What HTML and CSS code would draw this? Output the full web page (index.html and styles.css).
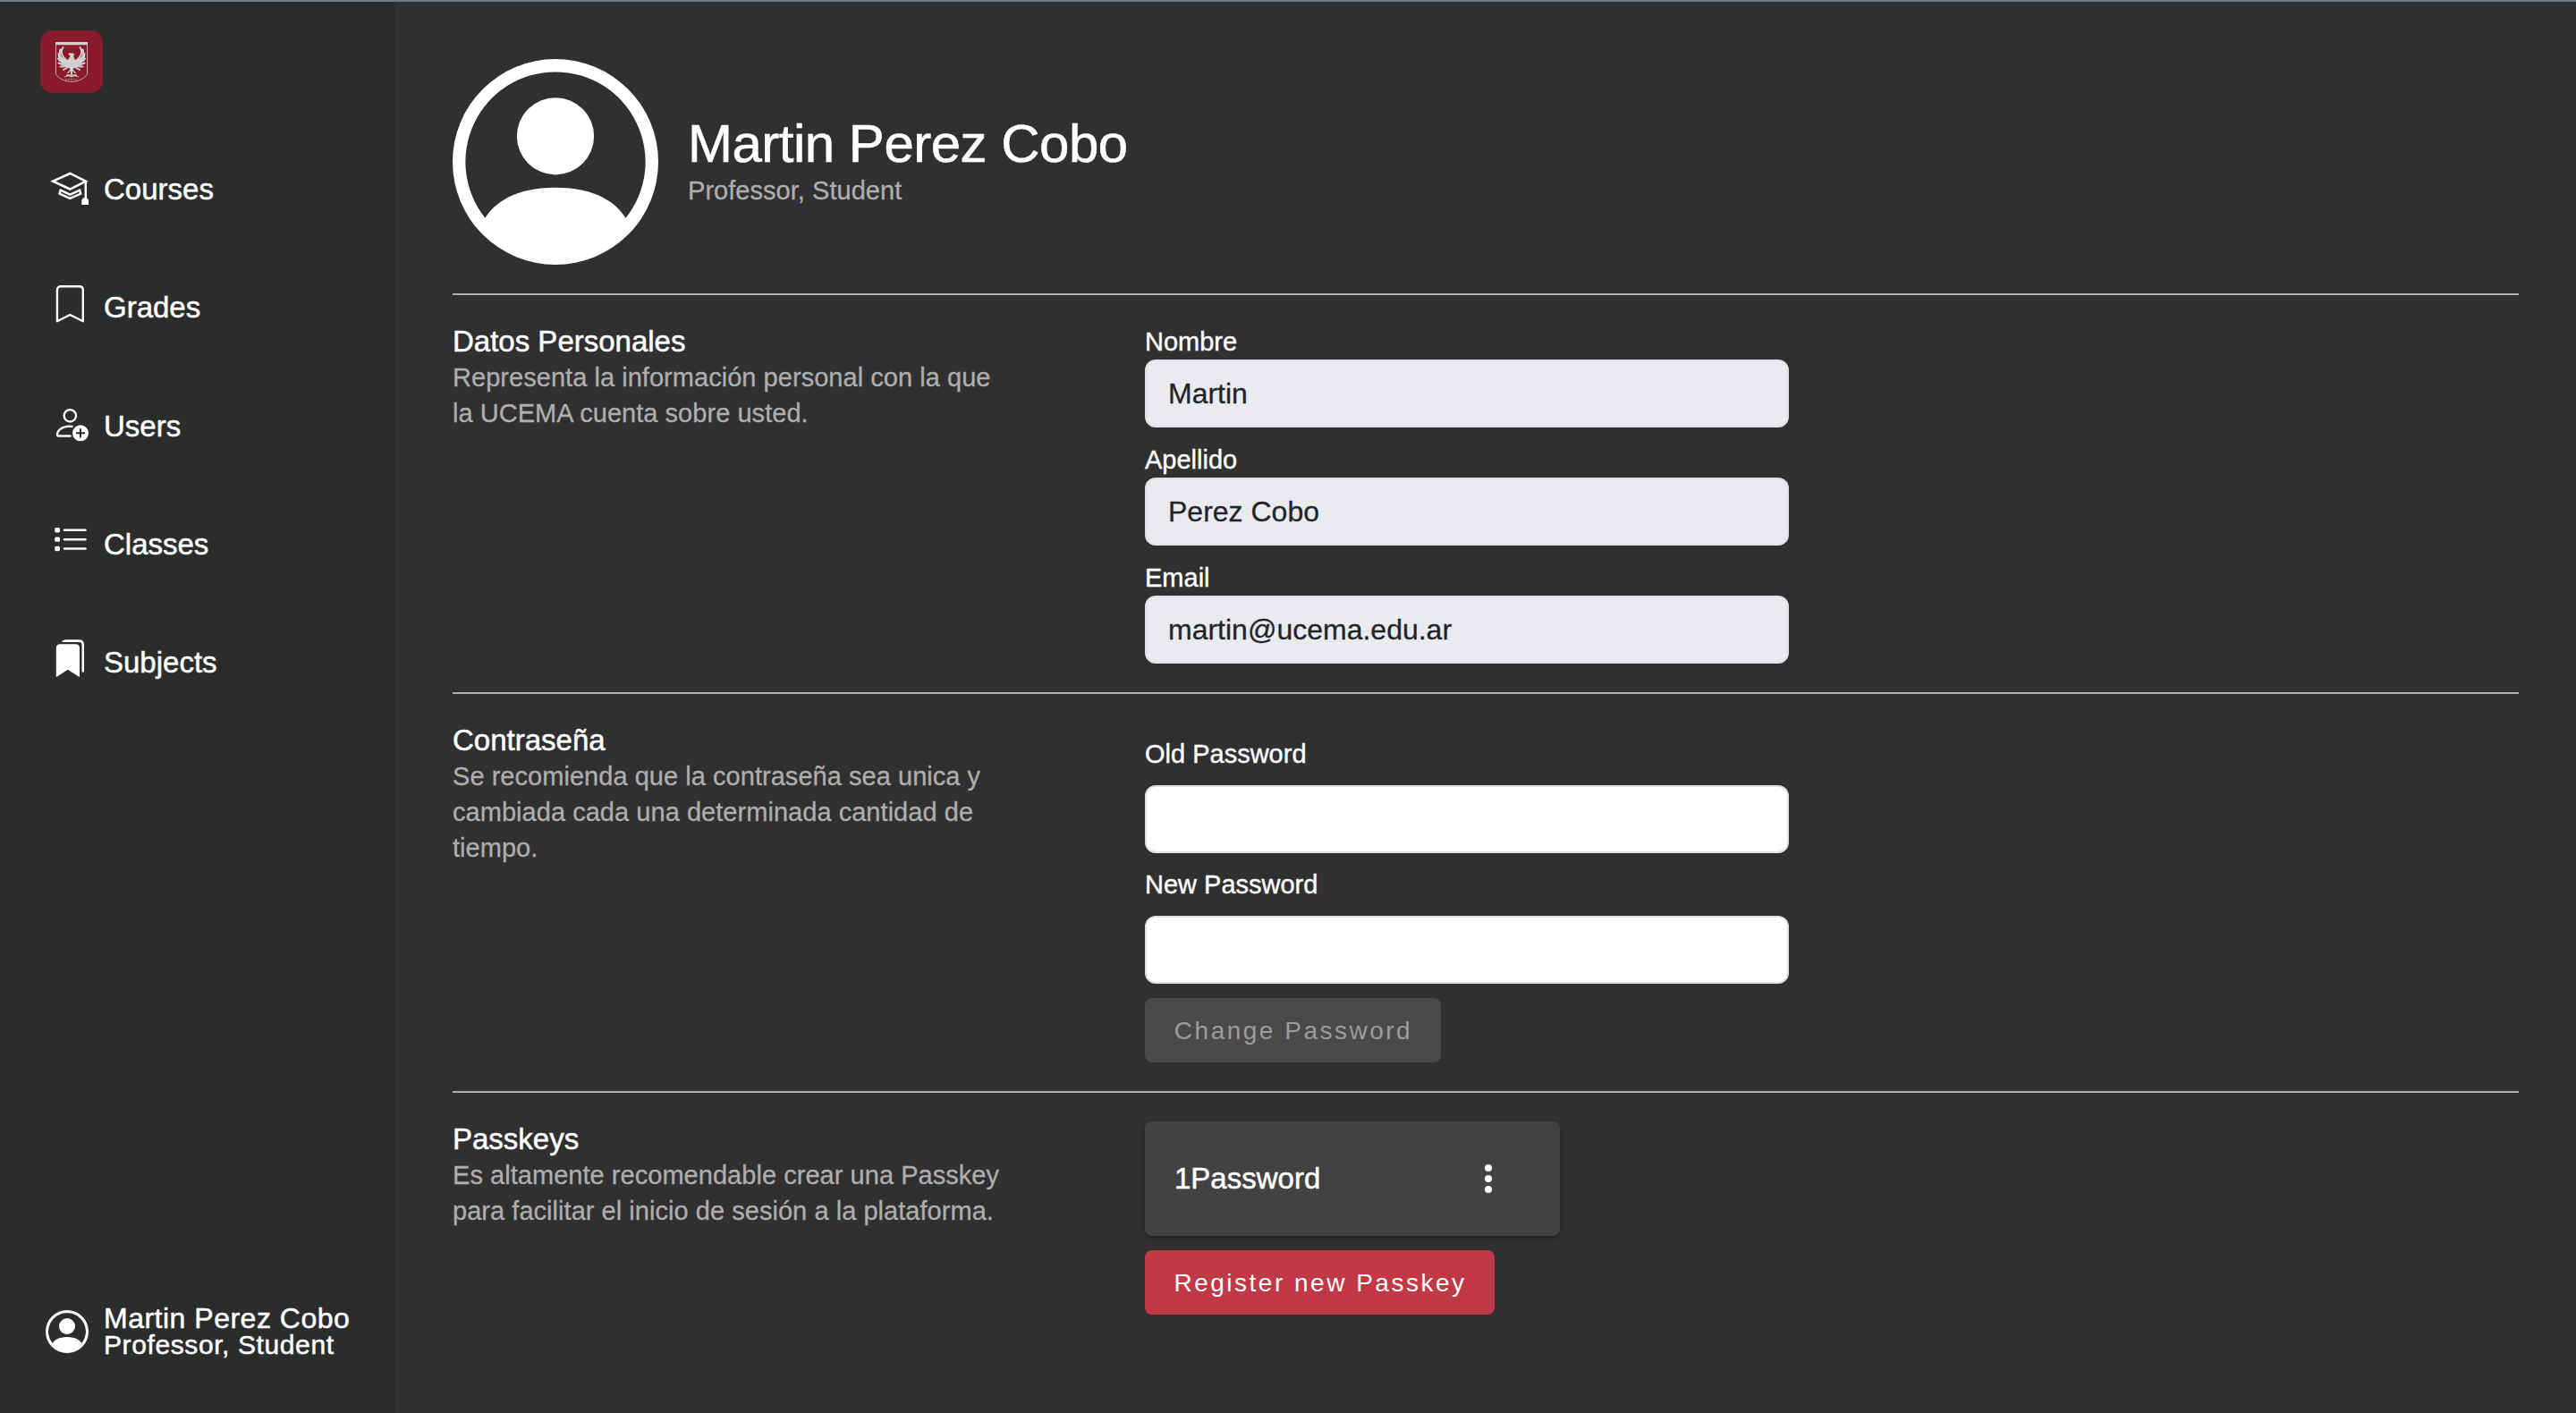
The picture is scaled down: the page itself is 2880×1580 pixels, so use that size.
FILE: index.html
```html
<!DOCTYPE html>
<html lang="es">
<head>
<meta charset="utf-8">
<title>Perfil</title>
<link rel="stylesheet" href="styles.css">
</head>
<body>
<div class="app">
  <aside class="sidebar">
    <svg class="logo" viewBox="0 0 70 70">
      <rect width="70" height="70" rx="14" fill="#881a2b"/>
      <g fill="none" stroke="#cfb5b8" stroke-width="0.9">
        <path d="M17.500 13.500V49c2 3 5 5 8 6.500 6 2.400 13 2.400 19 0 3-1.500 6-3.500 8-6.500V13.500"/>
      </g>
      <path d="M17 13h36v3.200H17z" fill="#d0d0d0"/>
      <g fill="none" stroke="#d0d0d0" stroke-linecap="round" stroke-width="2">
        <path d="M25.500 19C22 24 24 30 32 35M22.500 21.500C20 28 24 33 32 36.500M20.500 26C20 31 25 35 32 37.500M20 31.500C22 35 27 37 32 38M20.500 36.500C24 38 28 38.500 32 39M22.500 40.500C26 40.500 29 40 33 39M26 44L33 40"/>
        <path d="M44.500 19C48 24 46 30 38 35M47.500 21.500C50 28 46 33 38 36.500M49.500 26C50 31 45 35 38 37.500M50 31.500C48 35 43 37 38 38M49.500 36.500C46 38 42 38.500 38 39M47.500 40.500C44 40.500 41 40 37 39M44 44L37 40"/>
      </g>
      <path d="M31 26.200c2-1.200 5-1.200 7.500.6l-1.500 1.400 1 3.300 3 3-2 6-2.500 3 4 4.500-2.500-.5-2-2.500V49h-2v-4l-2 2.500-2.500.5 4-4.500-2.500-3-2-6 3-3 1.500-3z" fill="#d0d0d0"/>
      <path d="M26.500 53l3-3.800h11l3 3.800c-3-1.800-6-1.800-8.500-.4-2.500-1.400-5.500-1.400-8.500.4z" fill="#cdb4b8"/>
      <path d="M28 54.800h14" stroke="#bd8790" stroke-width="1" stroke-dasharray="2 .8" fill="none"/>
    </svg>
    <nav class="nav">
      <a class="nav-item">
        <svg class="nav-icon" viewBox="0 0 48 56" fill="none" stroke="#fff" stroke-width="2.500">
          <path d="M5.300 19.700L24.300 11l17.700 8.700-17.700 8.800z"/>
          <path d="M13.700 29.700l10.600 5 10.800-5 1.100 3.900-11.900 5.300-11.700-5.300z"/>
          <path d="M41.800 20.500V40"/>
          <path d="M39.300 38.300h3.600L45 40.500V46h-7.700v-5.500z" fill="#fff" stroke="none"/>
        </svg>
        <span class="nav-label">Courses</span>
      </a>
      <a class="nav-item">
        <svg class="nav-icon" viewBox="0 0 48 56" fill="none" stroke="#fff" stroke-width="2.400">
          <path d="M9.900 44.200V9.500q0-4.200 4.200-4.200h20.500q4.200 0 4.200 4.200v34.700L24.300 37z" stroke-linejoin="round"/>
        </svg>
        <span class="nav-label">Grades</span>
      </a>
      <a class="nav-item">
        <svg class="nav-icon" viewBox="0 0 48 56" fill="none" stroke="#fff" stroke-width="2.300">
          <circle cx="24.300" cy="16.800" r="6.700"/>
          <path d="M25.500 39.500H11.200q-1.200 0-1.200-1.600c0-4.500 5.500-9 13.500-9.200 2 0 3 .1 4 .3"/>
          <circle cx="36" cy="36.300" r="9" fill="#fff" stroke="none"/>
          <path d="M36 31.300v10M31 36.300h10" stroke="#2b2d2c" stroke-width="2"/>
        </svg>
        <span class="nav-label">Users</span>
      </a>
      <a class="nav-item">
        <svg class="nav-icon" viewBox="0 0 48 56" fill="none" stroke="#fff">
          <path d="M18 12.800h23.500M18 23.200h23.500M18 33.600h23.500" stroke-width="2.500" stroke-linecap="round"/>
          <g fill="#fff" stroke="none">
            <rect x="7.200" y="10" width="5.800" height="5.400" rx="1.600"/>
            <rect x="7.200" y="20.400" width="5.800" height="5.400" rx="1.600"/>
            <rect x="7.200" y="30.800" width="5.800" height="5.400" rx="1.600"/>
          </g>
        </svg>
        <span class="nav-label">Classes</span>
      </a>
      <a class="nav-item">
        <svg class="nav-icon" viewBox="0 0 48 56" fill="#fff">
          <path d="M8.800 12.700q0-4.500 4.500-4.500h17.200q4.500 0 4.500 4.500V44q0 1.300-1.200.6L21.800 36.700 10 44.600q-1.200.7-1.200-.6z"/>
          <path d="M14.800 6.400q1.300-3.200 5-3.200h14.700q5.500 0 5.500 5.500v30.800h-2.500V9.200q0-3.300-3.300-3.300H14.800z"/>
        </svg>
        <span class="nav-label">Subjects</span>
      </a>
    </nav>
    <div class="account">
      <svg class="account-icon" viewBox="0 0 16 16" fill="#fff">
        <path d="M11 6a3 3 0 1 1-6 0 3 3 0 0 1 6 0"/>
        <path fill-rule="evenodd" d="M0 8a8 8 0 1 1 16 0A8 8 0 0 1 0 8m8-7a7 7 0 0 0-5.468 11.370C3.242 11.226 4.805 10 8 10s4.757 1.225 5.468 2.370A7 7 0 0 0 8 1"/>
      </svg>
      <div class="account-text">
        <div class="account-name">Martin Perez Cobo</div>
        <div class="account-role">Professor, Student</div>
      </div>
    </div>
  </aside>

  <main class="main">
    <header class="profile">
      <svg class="avatar" viewBox="0 0 16 16" fill="#fff">
        <path d="M11 6a3 3 0 1 1-6 0 3 3 0 0 1 6 0"/>
        <path fill-rule="evenodd" d="M0 8a8 8 0 1 1 16 0A8 8 0 0 1 0 8m8-7a7 7 0 0 0-5.468 11.370C3.242 11.226 4.805 10 8 10s4.757 1.225 5.468 2.370A7 7 0 0 0 8 1"/>
      </svg>
      <div>
        <h1 class="profile-name">Martin Perez Cobo</h1>
        <div class="muted">Professor, Student</div>
      </div>
    </header>

    <section class="section">
      <div class="section-info">
        <h2 class="section-title">Datos Personales</h2>
        <p class="muted">Representa la información personal con la que la UCEMA cuenta sobre usted.</p>
      </div>
      <div class="fields">
        <label class="field">Nombre<input class="input" value="Martin" disabled></label>
        <label class="field">Apellido<input class="input" value="Perez Cobo" disabled></label>
        <label class="field">Email<input class="input" value="martin@ucema.edu.ar" disabled></label>
      </div>
    </section>

    <section class="section">
      <div class="section-info">
        <h2 class="section-title">Contraseña</h2>
        <p class="muted">Se recomienda que la contraseña sea unica y cambiada cada una determinada cantidad de tiempo.</p>
      </div>
      <div class="passwords">
        <label class="field spaced">Old Password<input class="input" type="password"></label>
        <label class="field spaced">New Password<input class="input" type="password"></label>
        <button class="button button-change" disabled>Change Password</button>
      </div>
    </section>

    <section class="section">
      <div class="section-info">
        <h2 class="section-title">Passkeys</h2>
        <p class="muted">Es altamente recomendable crear una Passkey para facilitar el inicio de sesión a la plataforma.</p>
      </div>
      <div class="passkeys">
        <div class="passkey">
          <span>1Password</span>
          <svg class="more" viewBox="0 0 48 48" fill="#fff"><circle cx="24" cy="12" r="4"/><circle cx="24" cy="24" r="4"/><circle cx="24" cy="36" r="4"/></svg>
        </div>
        <button class="button button-register">Register new Passkey</button>
      </div>
    </section>
  </main>
</div>
</body>
</html>
```
FILE: styles.css
```css
* { box-sizing: border-box; }

body {
  margin: 0;
  background: #303030;
  color: #fff;
  font-family: "Liberation Sans", Arial, sans-serif;
}

h1, h2, p { margin: 0; font-weight: 400; }

.app {
  display: flex;
  height: 1580px;
  border-top: 2px solid #6c7a84;
}

.sidebar {
  display: flex;
  flex-direction: column;
  width: 442px;
  padding: 32px 0 61px;
  background: #2b2d2c;
  -webkit-text-stroke: 0.5px #fff;
}

.logo { width: 70px; height: 70px; margin-left: 45px; }

.nav { margin-top: 41px; }

.nav-item {
  display: flex;
  align-items: center;
  gap: 14px;
  height: 132.25px;
  padding-left: 54px;
  font-size: 33px;
  line-height: 40px;
}

.nav-label { padding-top: 2px; }

.nav-icon { width: 48px; height: 56px; }

.account {
  display: flex;
  align-items: center;
  gap: 17px;
  margin-top: auto;
  padding-left: 51px;
  line-height: 30px;
}

.account-icon { width: 48px; height: 48px; }
.account-name { font-size: 32px; letter-spacing: 0.5px; }
.account-role { font-size: 30px; letter-spacing: 0.6px; }

.main { flex: 1; padding: 64px 64px 0; }

.profile {
  display: flex;
  align-items: center;
  gap: 33px;
  padding-bottom: 32px;
}

.avatar { width: 230px; height: 230px; }

.profile-name {
  font-size: 60px;
  line-height: 64px;
  letter-spacing: -0.5px;
  -webkit-text-stroke: 0.6px #fff;
}

.muted {
  color: #aeaeae;
  font-size: 29px;
  line-height: 40px;
  letter-spacing: 0.04px;
  -webkit-text-stroke: 0.3px #aeaeae;
}

.section {
  display: grid;
  grid-template-columns: 620px 720px;
  column-gap: 154px;
  align-items: start;
  padding: 32px 0;
  border-top: 2px solid #aeaeae;
}

.section-title {
  font-size: 33px;
  line-height: 40px;
  -webkit-text-stroke: 0.5px #fff;
}

.fields { display: grid; gap: 16px; }

.field {
  display: block;
  font-size: 29px;
  line-height: 40px;
  -webkit-text-stroke: 0.4px #fff;
}

.input {
  display: block;
  width: 720px;
  height: 76px;
  padding: 0 24px;
  border: 2px solid #dee2e6;
  border-radius: 12px;
  background: #fff;
  color: #212529;
  font: 32px "Liberation Sans", Arial, sans-serif;
  -webkit-text-stroke: 0.3px #212529;
}

.input:disabled { background: #eaebef; }

.spaced { padding-top: 15px; }
.spaced .input { margin-top: 15px; }

.button {
  display: block;
  height: 72px;
  margin-top: 16px;
  padding: 1px 0 0 1px;
  border: 0;
  border-radius: 8px;
  font: 28px "Liberation Sans", Arial, sans-serif;
  letter-spacing: 2.5px;
}

.button-change { width: 331px; background: #4a4a4a; color: #9c9c9c; }
.button-register { width: 391px; background: #c13846; color: #fff; }

.passkey {
  display: flex;
  align-items: center;
  justify-content: space-between;
  width: 464px;
  height: 128px;
  padding: 0 56px 0 33px;
  border-radius: 8px;
  background: #424242;
  box-shadow: 0 4px 2px -2px rgba(0, 0, 0, 0.2), 0 2px 2px rgba(0, 0, 0, 0.14), 0 2px 6px rgba(0, 0, 0, 0.12);
  font-size: 33px;
  -webkit-text-stroke: 0.5px #fff;
}

.more { width: 48px; height: 48px; }
```
